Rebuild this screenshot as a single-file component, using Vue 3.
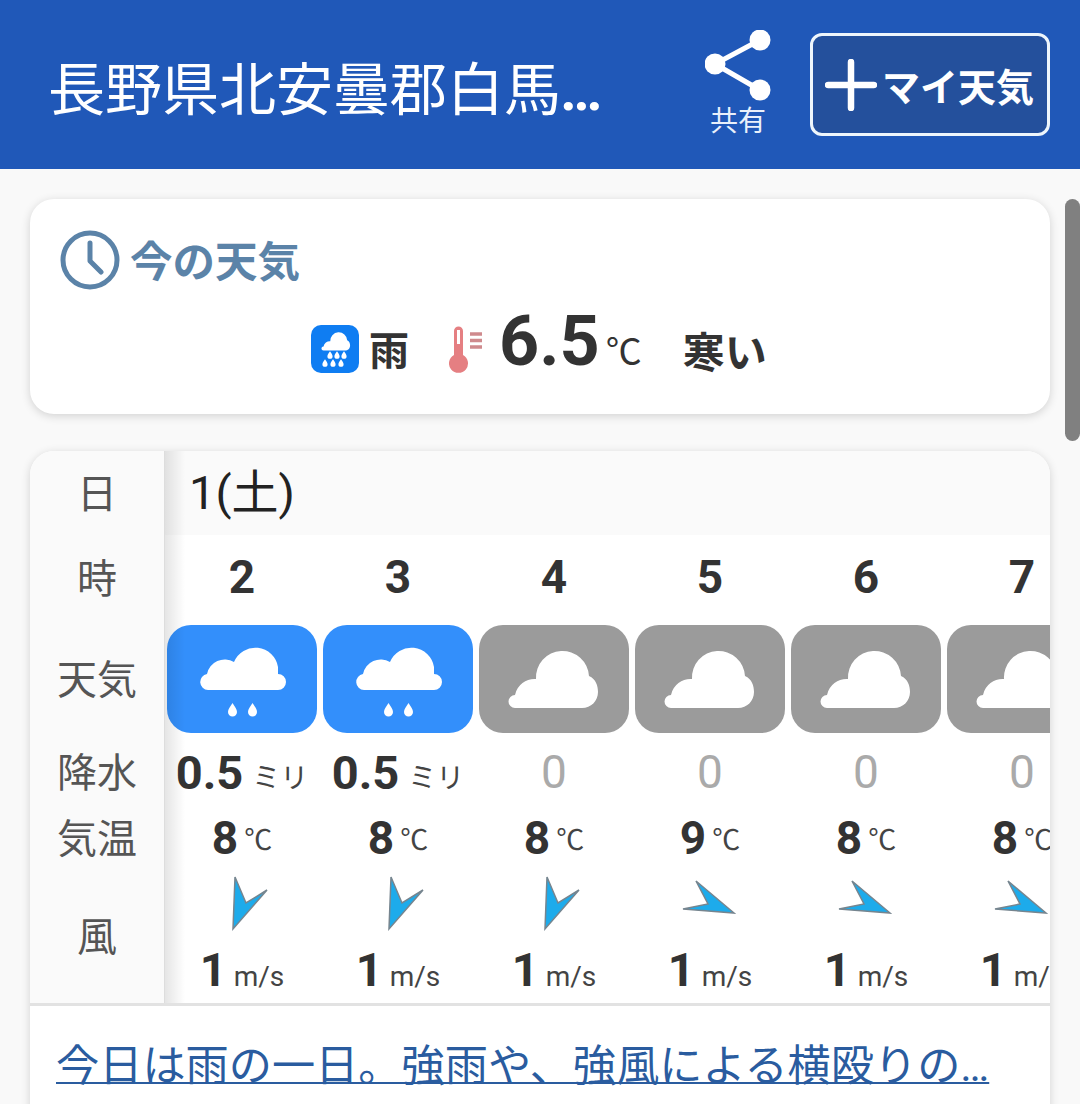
<script setup>
const rainCloud = 'M41 65A8 8 0 0 1 40 49.1A18 18 0 0 1 67 37A23 23 0 0 1 111 42L111 49A8 8 0 0 1 111 65Z'
const greyCloud = 'M36 83A6.5 6.5 0 0 1 36 70A20 20 0 0 1 57 54A26.5 26.5 0 0 1 110 51C117 54 119 61 119 67C119 76 112 83 103 83Z'
const arrowSouth = '23,2 34,28 55,15 21,54'
const arrowEast = '16,6 54,38 3,34 28,29'
const drop = 'M0 -3.800C1.500 -1.500 2.600 -0.300 2.600 1.200A2.600 2.600 0 0 1 -2.600 1.200C-2.600 -0.300 -1.500 -1.500 0 -3.800Z'
const smallDrops = [[19, 30], [26, 30], [33, 30], [14, 38], [22, 38], [30, 38]]

const hours = [
  { hour: 2, rain: true, precip: '0.5', temp: 8, arrow: arrowSouth },
  { hour: 3, rain: true, precip: '0.5', temp: 8, arrow: arrowSouth },
  { hour: 4, rain: false, precip: '0', temp: 8, arrow: arrowSouth },
  { hour: 5, rain: false, precip: '0', temp: 9, arrow: arrowEast },
  { hour: 6, rain: false, precip: '0', temp: 8, arrow: arrowEast },
  { hour: 7, rain: false, precip: '0', temp: 8, arrow: arrowEast }
]
</script>

<template>
  <div class="page">
    <header class="header">
      <h1 class="title">長野県北安曇郡白馬<span class="dots">…</span></h1>
      <div class="share">
        <svg width="66" height="72" viewBox="0 0 66 72">
          <path d="M55 10L10 34L55 60" fill="none" stroke="#fff" stroke-width="5" />
          <circle cx="55" cy="10" r="10.500" fill="#fff" />
          <circle cx="10" cy="34" r="10.500" fill="#fff" />
          <circle cx="55" cy="60" r="10.500" fill="#fff" />
        </svg>
        <span>共有</span>
      </div>
      <button class="my-btn">
        <svg width="52" height="52" viewBox="0 0 52 52">
          <path d="M3 26H49M26 3V49" stroke="#fff" stroke-width="6.500" stroke-linecap="round" />
        </svg>
        <span>マイ天気</span>
      </button>
    </header>

    <main class="content">
      <section class="card now">
        <div class="now-head">
          <svg width="60" height="60" viewBox="0 0 60 60">
            <circle cx="30" cy="30" r="27" fill="none" stroke="#5b83a8" stroke-width="5" />
            <path d="M30 13V31L41 42" fill="none" stroke="#5b83a8" stroke-width="5" stroke-linecap="round" stroke-linejoin="round" />
          </svg>
          <h2>今の天気</h2>
        </div>
        <div class="now-body">
          <svg class="rain-icon" width="48" height="48" viewBox="0 0 48 48">
            <rect width="48" height="48" rx="10" fill="#0f7df2" />
            <path :d="greyCloud" fill="#fff" transform="translate(1 -1) scale(0.32)" />
            <path v-for="d in smallDrops" :key="d.join()" :d="drop" fill="#fff" :transform="`translate(${d[0]} ${d[1]})`" />
          </svg>
          <b class="now-weather">雨</b>
          <svg class="thermo" width="34" height="48" viewBox="0 0 34 48">
            <path d="M5 5A4.500 4.500 0 0 1 14 5V29A9.500 9.500 0 1 1 5 29Z" fill="#e57f82" />
            <rect x="8" y="4" width="3" height="14" fill="#fff" />
            <path d="M21 8H33M21 14.500H33M21 21H33" stroke="#cf8a8d" stroke-width="3.500" />
          </svg>
          <b class="now-temp">6.5</b>
          <span class="now-unit">℃</span>
          <b class="now-feel">寒い</b>
        </div>
      </section>

      <section class="card forecast">
        <div class="table">
          <div class="labels">
            <div class="row-date">日</div>
            <div class="row-hour">時</div>
            <div class="row-weather">天気</div>
            <div class="row-precip">降水</div>
            <div class="row-temp">気温</div>
            <div class="row-wind">風</div>
          </div>
          <div class="scroller">
            <div class="date row-date">1(土)</div>
            <div class="cols">
              <div v-for="h in hours" :key="h.hour" class="col">
                <div class="row-hour hour">{{ h.hour }}</div>
                <div class="row-weather">
                  <svg class="weather-box" :class="{ rain: h.rain }" width="150" height="108" viewBox="0 0 150 108">
                    <template v-if="h.rain">
                      <path :d="rainCloud" fill="#fff" />
                      <path d="M65.500 78C68 82 70 84 70 87A4.500 4.500 0 0 1 61 87C61 84 63 82 65.500 78Z" fill="#fff" />
                      <path d="M85.500 78C88 82 90 84 90 87A4.500 4.500 0 0 1 81 87C81 84 83 82 85.500 78Z" fill="#fff" />
                    </template>
                    <path v-else :d="greyCloud" fill="#fff" />
                  </svg>
                </div>
                <div class="row-precip">
                  <template v-if="h.rain">
                    <b class="num precip">{{ h.precip }}</b><span class="mm">ミリ</span>
                  </template>
                  <span v-else class="zero">{{ h.precip }}</span>
                </div>
                <div class="row-temp">
                  <b class="num">{{ h.temp }}</b><span class="deg">℃</span>
                </div>
                <div class="row-wind wind">
                  <svg width="60" height="60" viewBox="0 0 60 60">
                    <polygon :points="h.arrow" fill="#1dabeb" stroke="#76858f" stroke-width="1.500" />
                  </svg>
                  <div class="speed"><b class="num">1</b><span class="ms">m/s</span></div>
                </div>
              </div>
            </div>
            <div class="edge-shadow"></div>
          </div>
        </div>
        <a class="summary" href="#">今日は雨の一日。強雨や、強風による横殴りの…</a>
      </section>
    </main>

    <div class="scrollbar"></div>
  </div>
</template>

<style>
html, body {
  margin: 0;
  overflow: hidden;
  background: #f9f9f9;
}
</style>

<style scoped>
.page {
  position: relative;
  height: 1104px;
  overflow: hidden;
  background: #f9f9f9;
  font-family: Roboto, "Noto Sans CJK JP", sans-serif;
  color: #333;
}

.header {
  height: 169px;
  box-sizing: border-box;
  padding: 0 30px 0 48px;
  display: flex;
  align-items: center;
  background: #2058b8;
}

.title {
  width: 554px;
  margin: 0 103px 0 0;
  color: #fff;
  font-size: 57px;
  font-weight: 400;
  white-space: nowrap;
}

.dots {
  font-weight: 700;
  margin-left: -1px;
}

.share {
  width: 66px;
  margin-right: 39px;
  display: flex;
  flex-direction: column;
  align-items: center;
  color: #e9f0fb;
  font-size: 28px;
  line-height: 36px;
}

.share svg {
  display: block;
}

.share span {
  margin-top: 2px;
}

.my-btn {
  width: 240px;
  height: 103px;
  padding: 0 0 0 12px;
  display: flex;
  align-items: center;
  gap: 5px;
  box-sizing: border-box;
  border: 3px solid #eef6fc;
  border-radius: 12px;
  background: #24509c;
  color: #fff;
  font-family: inherit;
  font-size: 38px;
  font-weight: 700;
}

.content {
  padding: 30px;
}

.card {
  border-radius: 24px;
  background: #fff;
  box-shadow: 0 2px 10px rgba(0, 0, 0, 0.16);
  overflow: hidden;
}

.now {
  height: 215px;
  margin-bottom: 37px;
  padding: 28px 30px 0;
  box-sizing: border-box;
}

.now-head {
  display: flex;
  align-items: center;
  gap: 10px;
  color: #5b83a8;
}

.now-head h2 {
  margin: 6px 0 0;
  font-size: 42.500px;
  line-height: 60px;
  font-weight: 700;
}

.now-body {
  height: 76px;
  margin-top: 10px;
  display: flex;
  align-items: center;
  padding-left: 251px;
  line-height: 1;
}

.rain-icon {
  margin-top: 16px;
}

.now-weather {
  margin: 22px 0 0 10px;
  font-size: 40px;
}

.thermo {
  margin: 18px 0 0 40px;
}

.now-temp {
  margin-left: 16px;
  font-size: 70px;
}

.now-unit {
  margin: 24px 0 0 6px;
  font-size: 36px;
}

.now-feel {
  margin: 26px 0 0 41px;
  font-size: 42px;
}

.forecast {
  height: 700px;
}

.table {
  display: flex;
  border-bottom: 3px solid #e2e2e2;
}

.labels {
  width: 135px;
  flex: none;
  box-sizing: border-box;
  border-right: 1px solid #ddd;
  background: #fafafa;
  color: #555;
  font-size: 40px;
  text-align: center;
}

.labels > div {
  display: flex;
  align-items: center;
  justify-content: center;
  box-sizing: border-box;
  padding-bottom: 4px;
}

.labels > .row-hour {
  padding-bottom: 8px;
}

.labels > .row-wind {
  padding-bottom: 0;
}

.scroller {
  position: relative;
  flex: 1;
  min-width: 0;
  overflow: hidden;
}

.row-date {
  height: 84px;
}

.row-hour {
  height: 90px;
}

.row-weather {
  height: 108px;
}

.row-precip {
  height: 78px;
}

.row-temp {
  height: 54px;
}

.row-wind {
  height: 138px;
}

.date {
  padding-left: 24px;
  background: #fafafa;
  color: #222;
  font-size: 47px;
  line-height: 84px;
}

.cols {
  display: flex;
  width: 936px;
  margin-left: -1px;
}

.col {
  width: 156px;
  flex: none;
  text-align: center;
  white-space: nowrap;
}

.hour {
  font-size: 46px;
  font-weight: 700;
  line-height: 84px;
}

.weather-box {
  display: block;
  margin: 0 3px;
  border-radius: 24px;
  background: #9b9b9b;
}

.weather-box.rain {
  background: #338ffb;
}

.row-precip,
.row-temp {
  display: flex;
  align-items: center;
  justify-content: center;
}

.num {
  font-size: 46px;
  font-weight: 700;
}

.num.precip {
  font-size: 47px;
}

.mm {
  margin: 8px 0 0 9px;
  font-size: 28px;
  color: #444;
}

.zero {
  font-size: 46px;
  color: #aaa;
}

.deg {
  margin-left: 6px;
  font-size: 28px;
  color: #444;
}

.wind {
  box-sizing: border-box;
  padding-top: 10px;
}

.wind svg {
  display: block;
  margin: 0 auto;
}

.speed {
  height: 58px;
  margin-top: 6px;
  line-height: 58px;
}

.speed .num {
  font-size: 47px;
}

.ms {
  margin-left: 7px;
  font-size: 28px;
  color: #444;
}

.edge-shadow {
  position: absolute;
  top: 0;
  bottom: 0;
  left: 0;
  width: 20px;
  background: linear-gradient(to right, rgba(0, 0, 0, 0.1), rgba(0, 0, 0, 0));
}

.summary {
  display: block;
  margin: 32px 0 0 26px;
  color: #2a5c9f;
  font-size: 43.200px;
  line-height: 58px;
  white-space: nowrap;
  text-decoration-thickness: 2px;
  text-underline-offset: 1px;
}

.scrollbar {
  position: absolute;
  top: 199px;
  right: 0;
  width: 15px;
  height: 242px;
  border-radius: 8px;
  background: #808080;
}
</style>
